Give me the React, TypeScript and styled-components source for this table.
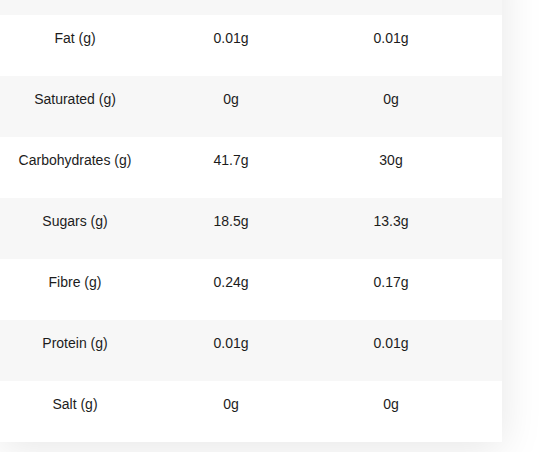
import styled, { createGlobalStyle } from "styled-components";

const GlobalStyle = createGlobalStyle`
  html, body {
    margin: 0;
    padding: 0;
    background: #ffffff;
    overflow: hidden;
  }
  body {
    font-family: "Liberation Sans", Arial, sans-serif;
  }
`;

const Page = styled.div`
  width: 551px;
  height: 452px;
  overflow: hidden;
`;

const StyledCard = styled.div`
  width: 502px;
  margin-top: -46px;
  background: #ffffff;
  box-shadow: 0 6px 40px rgba(0, 0, 0, 0.1);
`;

const StyledRow = styled.div<{ $striped: boolean }>`
  display: grid;
  grid-template-columns: 150px 162px 158px;
  height: 61px;
  padding-right: 32px;
  box-sizing: border-box;
  background-color: ${({ $striped }) => ($striped ? "#f7f7f7" : "#ffffff")};
`;

const StyledCell = styled.div`
  padding: 15px 2px 0;
  text-align: center;
  font-size: 14px;
  line-height: 16px;
  color: #1c1c1c;
  white-space: nowrap;
`;

// the row above "Fat" is scrolled mostly out of view, so it's left empty
const rows = [
  { label: "", per100: "", serving: "" },
  { label: "Fat (g)", per100: "0.01g", serving: "0.01g" },
  { label: "Saturated (g)", per100: "0g", serving: "0g" },
  { label: "Carbohydrates (g)", per100: "41.7g", serving: "30g" },
  { label: "Sugars (g)", per100: "18.5g", serving: "13.3g" },
  { label: "Fibre (g)", per100: "0.24g", serving: "0.17g" },
  { label: "Protein (g)", per100: "0.01g", serving: "0.01g" },
  { label: "Salt (g)", per100: "0g", serving: "0g" },
];

const App = () => {
  return (
    <Page>
      <GlobalStyle />
      <StyledCard>
        {rows.map((row, i) => (
          <StyledRow key={i} $striped={i % 2 === 0}>
            <StyledCell>{row.label}</StyledCell>
            <StyledCell>{row.per100}</StyledCell>
            <StyledCell>{row.serving}</StyledCell>
          </StyledRow>
        ))}
      </StyledCard>
    </Page>
  );
};

export default App;
